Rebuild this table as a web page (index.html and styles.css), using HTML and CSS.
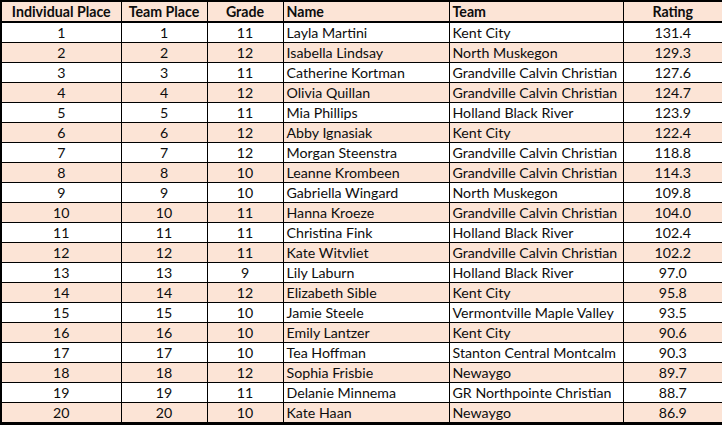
FILE: index.html
```html
<!DOCTYPE html>
<html>
<head>
<meta charset="utf-8">
<link rel="stylesheet" href="styles.css">
</head>
<body>
<table class="results">
  <colgroup>
    <col class="c-ind"><col class="c-team-place"><col class="c-grade"><col class="c-name"><col class="c-team"><col class="c-rating">
  </colgroup>
  <thead>
    <tr><th>Individual Place</th><th>Team Place</th><th>Grade</th><th class="left">Name</th><th class="left">Team</th><th>Rating</th></tr>
  </thead>
  <tbody>
    <tr><td>1</td><td>1</td><td>11</td><td class="left">Layla Martini</td><td class="left">Kent City</td><td>131.4</td></tr>
    <tr><td>2</td><td>2</td><td>12</td><td class="left">Isabella Lindsay</td><td class="left">North Muskegon</td><td>129.3</td></tr>
    <tr><td>3</td><td>3</td><td>11</td><td class="left">Catherine Kortman</td><td class="left">Grandville Calvin Christian</td><td>127.6</td></tr>
    <tr><td>4</td><td>4</td><td>12</td><td class="left">Olivia Quillan</td><td class="left">Grandville Calvin Christian</td><td>124.7</td></tr>
    <tr><td>5</td><td>5</td><td>11</td><td class="left">Mia Phillips</td><td class="left">Holland Black River</td><td>123.9</td></tr>
    <tr><td>6</td><td>6</td><td>12</td><td class="left">Abby Ignasiak</td><td class="left">Kent City</td><td>122.4</td></tr>
    <tr><td>7</td><td>7</td><td>12</td><td class="left">Morgan Steenstra</td><td class="left">Grandville Calvin Christian</td><td>118.8</td></tr>
    <tr><td>8</td><td>8</td><td>10</td><td class="left">Leanne Krombeen</td><td class="left">Grandville Calvin Christian</td><td>114.3</td></tr>
    <tr><td>9</td><td>9</td><td>10</td><td class="left">Gabriella Wingard</td><td class="left">North Muskegon</td><td>109.8</td></tr>
    <tr><td>10</td><td>10</td><td>11</td><td class="left">Hanna Kroeze</td><td class="left">Grandville Calvin Christian</td><td>104.0</td></tr>
    <tr><td>11</td><td>11</td><td>11</td><td class="left">Christina Fink</td><td class="left">Holland Black River</td><td>102.4</td></tr>
    <tr><td>12</td><td>12</td><td>11</td><td class="left">Kate Witvliet</td><td class="left">Grandville Calvin Christian</td><td>102.2</td></tr>
    <tr><td>13</td><td>13</td><td>9</td><td class="left">Lily Laburn</td><td class="left">Holland Black River</td><td>97.0</td></tr>
    <tr><td>14</td><td>14</td><td>12</td><td class="left">Elizabeth Sible</td><td class="left">Kent City</td><td>95.8</td></tr>
    <tr><td>15</td><td>15</td><td>10</td><td class="left">Jamie Steele</td><td class="left">Vermontville Maple Valley</td><td>93.5</td></tr>
    <tr><td>16</td><td>16</td><td>10</td><td class="left">Emily Lantzer</td><td class="left">Kent City</td><td>90.6</td></tr>
    <tr><td>17</td><td>17</td><td>10</td><td class="left">Tea Hoffman</td><td class="left">Stanton Central Montcalm</td><td>90.3</td></tr>
    <tr><td>18</td><td>18</td><td>12</td><td class="left">Sophia Frisbie</td><td class="left">Newaygo</td><td>89.7</td></tr>
    <tr><td>19</td><td>19</td><td>11</td><td class="left">Delanie Minnema</td><td class="left">GR Northpointe Christian</td><td>88.7</td></tr>
    <tr><td>20</td><td>20</td><td>10</td><td class="left">Kate Haan</td><td class="left">Newaygo</td><td>86.9</td></tr>
  </tbody>
</table>
</body>
</html>
```

FILE: styles.css
```css
html, body {
  margin: 0;
  padding: 0;
  background: #ffffff;
}

.results {
  border-collapse: collapse;
  table-layout: fixed;
  width: 722px;
  font-family: Lato, "Open Sans", sans-serif;
  font-size: 14.2px;
  color: #0d0d0d;
  border-top: 2px solid #000;
  border-left: 2px solid #000;
  border-right: 2px solid #000;
  border-bottom: 3px solid #000;
}

.c-ind { width: 120px; }
.c-team-place { width: 86px; }
.c-grade { width: 76px; }
.c-name { width: 166px; }
.c-team { width: 174px; }
.c-rating { width: 100px; }

.results th,
.results td {
  border: 1px solid #000;
  height: 19px;
  padding: 0 3px;
  text-align: center;
  line-height: 19px;
  white-space: nowrap;
  overflow: hidden;
}

.results th {
  font-weight: bold;
  background: #fce4d6;
  border-bottom: 2px solid #000;
}

.results .left {
  text-align: left;
}

.results tbody tr:nth-child(even) td {
  background: #fce4d6;
}
```
